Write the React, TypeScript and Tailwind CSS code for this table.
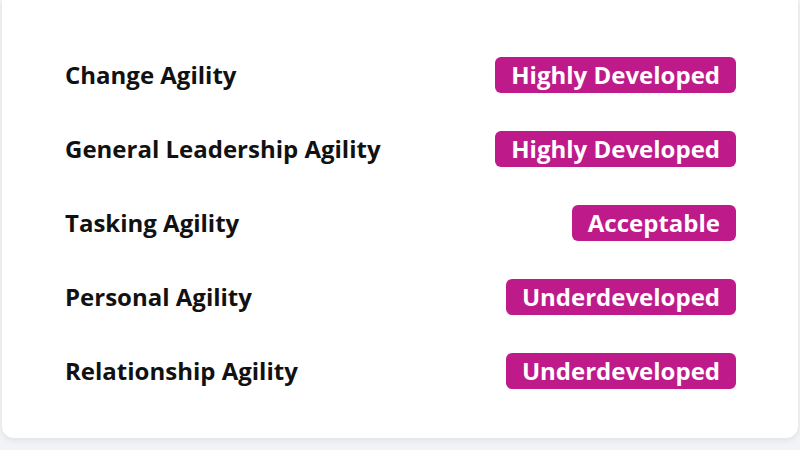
const rows: { label: string; level: string }[] = [
  { label: "Change Agility", level: "Highly Developed" },
  { label: "General Leadership Agility", level: "Highly Developed" },
  { label: "Tasking Agility", level: "Acceptable" },
  { label: "Personal Agility", level: "Underdeveloped" },
  { label: "Relationship Agility", level: "Underdeveloped" },
];

function AgilityRow({ label, level }: { label: string; level: string }) {
  return (
    <div className="flex h-9 items-center justify-between">
      <div className="text-[24px] font-bold text-[#111111]">{label}</div>
      <div className="flex h-9 items-center rounded-md bg-[#be1a8a] px-4 text-[24px] font-bold text-white">
        {level}
      </div>
    </div>
  );
}

export default function App() {
  return (
    <div
      className="min-h-[450px] bg-[#f1f3f6] px-[2px] pb-3"
      style={{ fontFamily: "'Open Sans', 'Noto Sans', sans-serif" }}
    >
      <div className="flex flex-col gap-[38px] rounded-b-xl bg-white pb-[49px] pl-[63px] pr-[62px] pt-[57px] shadow-[0_2px_6px_rgba(15,23,42,0.08)]">
        {rows.map((row) => (
          <AgilityRow key={row.label} label={row.label} level={row.level} />
        ))}
      </div>
    </div>
  );
}
